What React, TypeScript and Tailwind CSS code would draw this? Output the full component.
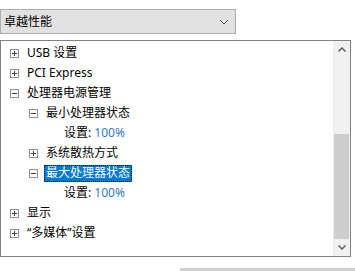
import React from 'react';

const font = { fontFamily: '"Noto Sans", "Noto Sans CJK SC", sans-serif' };

const Toggle = ({ open }: { open: boolean }) => (
    <svg width="9" height="9" viewBox="0 0 9 9" className="shrink-0">
        <rect x="0.5" y="0.5" width="8" height="8" fill="#fff" stroke="#919191" />
        <path d="M2 4.5h5" stroke="#3c3c3c" />
        {!open && <path d="M4.5 2v5" stroke="#3c3c3c" />}
    </svg>
);

interface Row {
    level: number;
    label: string;
    toggle?: 'open' | 'closed';
    value?: string;
    selected?: boolean;
}

const rows: Row[] = [
    { level: 0, label: 'USB 设置', toggle: 'closed' },
    { level: 0, label: 'PCI Express', toggle: 'closed' },
    { level: 0, label: '处理器电源管理', toggle: 'open' },
    { level: 1, label: '最小处理器状态', toggle: 'open' },
    { level: 2, label: '设置:', value: '100%' },
    { level: 1, label: '系统散热方式', toggle: 'closed' },
    { level: 1, label: '最大处理器状态', toggle: 'open', selected: true },
    { level: 2, label: '设置:', value: '100%' },
    { level: 0, label: '显示', toggle: 'closed' },
    { level: 0, label: '“多媒体”设置', toggle: 'closed' },
];

const indent = ['pl-[9px]', 'pl-[28px]', 'pl-[63px]'];

export default function App() {
    return (
        <div className="w-[355px] h-[271px] bg-white overflow-hidden text-[12px] text-black" style={font}>
            {/* power plan dropdown */}
            <div className="mt-[9px] w-[236px] h-[25px] bg-[#e1e1e1] border border-[#adadad] flex items-center justify-between pl-[3px] pr-[6px]">
                <span>卓越性能</span>
                <svg width="10" height="6" viewBox="0 0 10 6">
                    <path d="M1 1l4 4 4-4" fill="none" stroke="#5a5a5a" />
                </svg>
            </div>

            {/* settings tree */}
            <div className="mt-[6px] w-[351px] h-[217px] border border-[#828282] flex">
                <div className="flex-1 pt-[2px]">
                    {rows.map((r, i) => (
                        <div key={i} className={`h-[20px] flex items-center gap-[8px] ${indent[r.level]}`}>
                            {r.toggle && <Toggle open={r.toggle === 'open'} />}
                            {r.value ? (
                                <span>
                                    {r.label} <span className="text-[#2f7bc4]">{r.value}</span>
                                </span>
                            ) : r.selected ? (
                                <span className="-ml-[2px] h-[17px] px-[1px] flex items-center bg-[#0078d7] text-white border border-dotted border-[#1a1a1a]">
                                    {r.label}
                                </span>
                            ) : (
                                <span>{r.label}</span>
                            )}
                        </div>
                    ))}
                </div>
                <div className="w-[17px] bg-[#f0f0f0] flex flex-col">
                    <div className="h-[17px] flex items-center justify-center">
                        <svg width="8" height="5" viewBox="0 0 8 5">
                            <path d="M0.5 4.5l3.5-3.5 3.5 3.5" fill="none" stroke="#606060" strokeWidth="1.5" />
                        </svg>
                    </div>
                    <div className="h-[76px]" />
                    <div className="h-[105px] mx-[1px] bg-[#cdcdcd]" />
                    <div className="h-[17px] flex items-center justify-center">
                        <svg width="8" height="5" viewBox="0 0 8 5">
                            <path d="M0.5 0.5l3.5 3.5 3.5-3.5" fill="none" stroke="#606060" strokeWidth="1.5" />
                        </svg>
                    </div>
                </div>
            </div>

            <div className="mt-[11px] ml-[180px] h-[4px] bg-[#d0d0d0]" />
        </div>
    );
}
